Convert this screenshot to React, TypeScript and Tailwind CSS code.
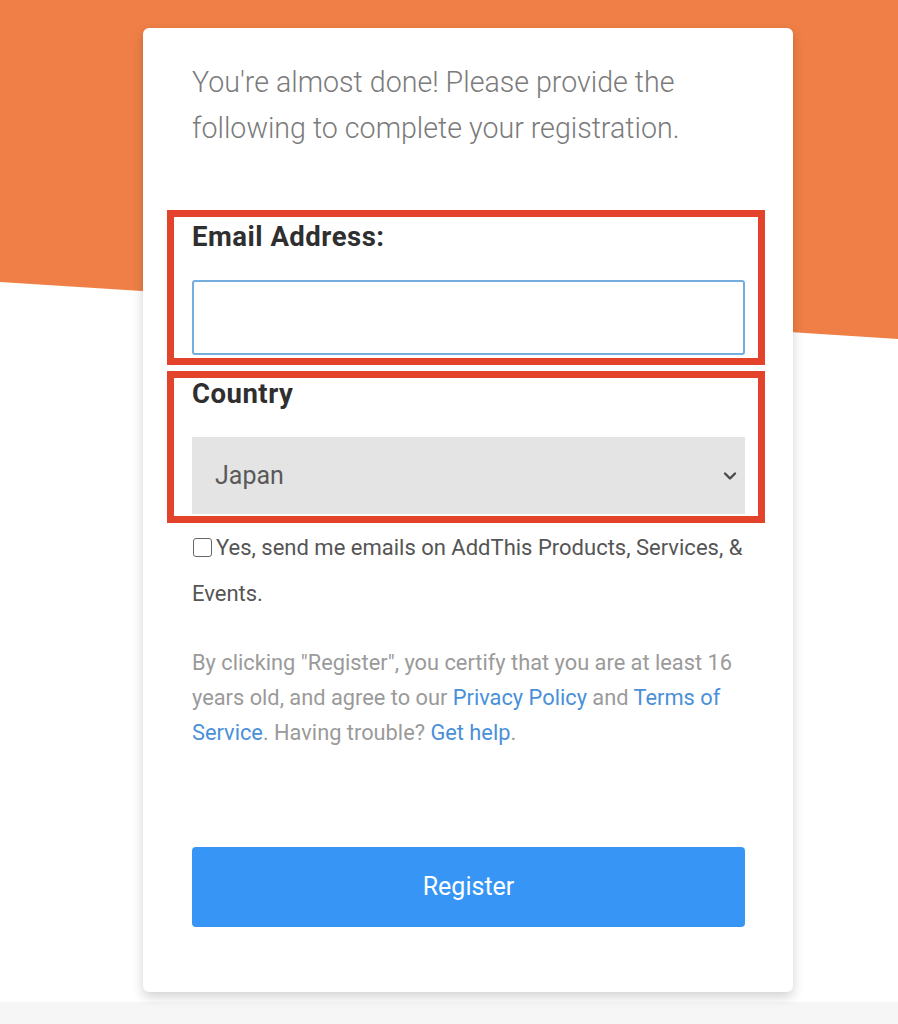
import React from "react";

export default function App() {
  return (
    <div className="relative w-[898px] h-[1024px] overflow-hidden bg-[#f6f6f6] font-['Roboto',sans-serif]">
      <div className="absolute left-0 top-0 w-full h-[1002px] bg-white" />
      <div className="absolute left-0 top-0 w-full h-[340px] bg-[#ef7f46] [clip-path:polygon(0_0,100%_0,100%_339px,0_282px)]" />
      <div className="relative pl-[143px] pt-[28px]">
        <div className="w-[650px] h-[964px] bg-white rounded-[6px] shadow-[0_5px_12px_rgba(0,0,0,0.18)] pl-[49px] pr-[48px] pt-[31px]">
          <p className="text-[28.6px] leading-[46px] font-light text-[#7b7b7b]">
            You're almost done! Please provide the following to complete your registration.
          </p>

          <div className="mt-[59px] -ml-[25px] -mr-[20px] border-[7px] border-[#e2432a] pl-[18px] pr-[13px] pt-[5px] pb-[3px]">
            <div className="text-[27.5px] leading-[30px] font-bold tracking-[0.5px] text-[#2f2f2f]">Email Address:</div>
            <div className="mt-[28px] h-[75px] rounded-[3px] border-[2px] border-[#74aee0] bg-white" />
          </div>

          <div className="mt-[6px] -ml-[25px] -mr-[20px] border-[7px] border-[#e2432a] pl-[18px] pr-[13px] pt-[1px] pb-[2px]">
            <div className="text-[27.5px] leading-[30px] font-bold tracking-[0.5px] text-[#2f2f2f]">Country</div>
            <div className="mt-[28px] h-[77px] bg-[#e4e4e4] flex items-center justify-between pl-[23px] pr-[8px]">
              <span className="text-[25px] text-[#5a5a5a]">Japan</span>
              <svg width="14" height="10" viewBox="0 0 14 10">
                <path d="M2 2.5 L7 7.5 L12 2.5" fill="none" stroke="#4a4a4a" strokeWidth="2.4" strokeLinecap="round" strokeLinejoin="round" />
              </svg>
            </div>
          </div>

          <div className="mt-[2px] text-[22px] leading-[46px] text-[#555]">
            <span className="inline-block align-[-2px] w-[19px] h-[19px] border border-[#666] rounded-[3px] mr-[4px] ml-[1px] bg-white" />
            Yes, send me emails on AddThis Products, Services, &amp; Events.
          </div>

          <p className="mt-[28px] text-[21.8px] leading-[35px] text-[#9a9a9a]">
            By clicking "Register", you certify that you are at least 16 years old, and agree to our{" "}
            <span className="text-[#4a90d9]">Privacy Policy</span> and{" "}
            <span className="text-[#4a90d9]">Terms of Service</span>. Having trouble?{" "}
            <span className="text-[#4a90d9]">Get help</span>.
          </p>

          <div className="mt-[97px] h-[80px] rounded-[4px] bg-[#3795f6] flex items-center justify-center text-white text-[25px]">
            Register
          </div>
        </div>
      </div>
    </div>
  );
}
